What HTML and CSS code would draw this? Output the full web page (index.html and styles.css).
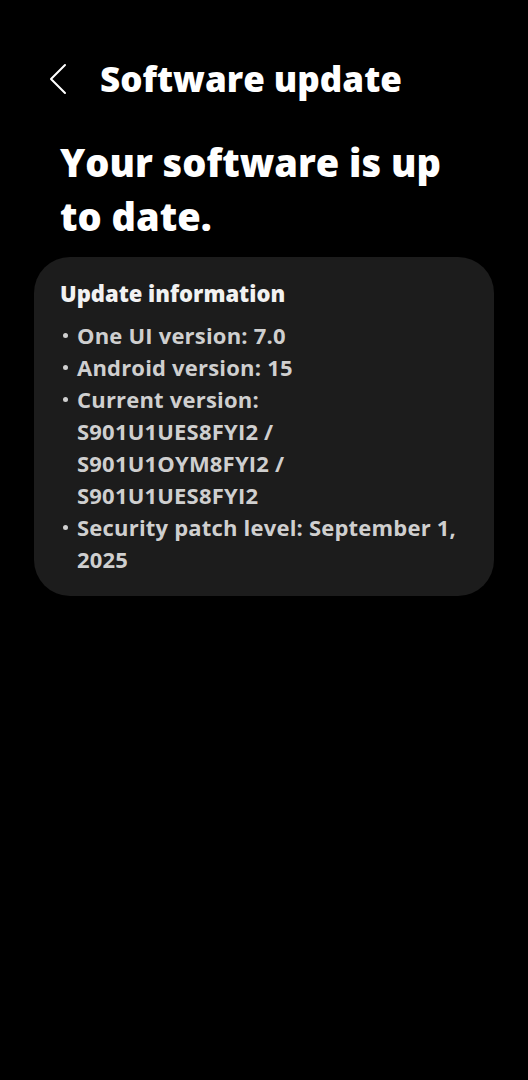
FILE: index.html
```html
<!DOCTYPE html>
<html lang="en">
<head>
    <meta charset="UTF-8">
    <meta name="viewport" content="width=device-width, initial-scale=1.0">
    <title>Software update</title>
    <link rel="stylesheet" href="styles.css">
</head>
<body>
    <header class="top-bar">
        <button class="back" aria-label="Back">
            <svg width="20" height="32" viewBox="0 0 20 32">
                <path d="M17 2 L3 16 L17 30" fill="none" stroke="#fff" stroke-width="2" stroke-linecap="round" stroke-linejoin="round"/>
            </svg>
        </button>
        <h1>Software update</h1>
    </header>

    <main>
        <h2 class="status">Your software is up to date.</h2>

        <section class="card">
            <h3>Update information</h3>
            <ul class="info">
                <li>One UI version: 7.0</li>
                <li>Android version: 15</li>
                <li>Current version:<br>S901U1UES8FYI2 /<br>S901U1OYM8FYI2 /<br>S901U1UES8FYI2</li>
                <li>Security patch level: September 1, 2025</li>
            </ul>
        </section>
    </main>
</body>
</html>
```

FILE: styles.css
```css
*{
    margin: 0;
    padding: 0;
    box-sizing: border-box;
}
body{
    background-color: #000;
    color: #fff;
    font-family: "Open Sans", "Liberation Sans", sans-serif;
}
.top-bar{
    display: flex;
    align-items: center;
    height: 64px;
    margin-top: 46px;
    padding-left: 48px;
}
.back{
    background: none;
    border: none;
    width: 52px;
    height: 40px;
    display: flex;
    align-items: center;
    margin-top: 2px;
}
.top-bar h1{
    font-size: 35px;
    font-weight: 800;
}
main{
    padding: 0 34px;
}
.status{
    font-size: 38px;
    font-weight: 800;
    line-height: 54px;
    padding: 25px 26px 14px;
}
.card{
    background-color: #1c1c1c;
    border-radius: 36px;
    padding: 20px 26px 21px;
}
.card h3{
    font-size: 22px;
    font-weight: 800;
    line-height: 32px;
    color: #f2f2f2;
    margin-bottom: 10px;
}
.info{
    list-style: none;
    color: #cfcfcf;
    font-size: 22px;
    font-weight: 700;
    line-height: 32px;
    letter-spacing: 0.2px;
}
.info li{
    position: relative;
    padding-left: 17px;
}
.info li::before{
    content: "";
    position: absolute;
    left: 3px;
    top: 14px;
    width: 5px;
    height: 5px;
    border-radius: 50%;
    background-color: #cfcfcf;
}
```
